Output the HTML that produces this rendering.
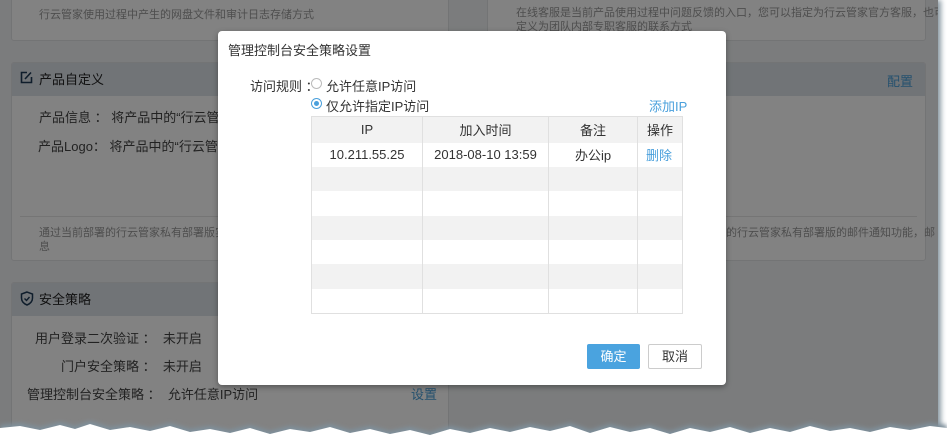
<!DOCTYPE html>
<html><head><meta charset="utf-8"><style>
*{margin:0;padding:0;box-sizing:border-box}
html,body{width:947px;height:447px;overflow:hidden}
body{background:#fff;position:relative;font-family:"Liberation Sans","Noto Sans CJK SC",sans-serif;font-size:13px}
#shot{position:absolute;left:0;top:0;width:938px;height:447px;background:#f2f3f5;box-shadow:3px 0 5px #8a99a3;overflow:hidden}
.card{position:absolute;background:#fff;border:1px solid #e2e3e5;border-radius:3px;overflow:hidden}
.hd{position:absolute;left:0;right:0;top:0;height:33px;background:#dde3ea;color:#222;font-size:13px;line-height:33px;padding-left:27px}
.t{position:absolute;color:#444;white-space:nowrap}
.s{position:absolute;color:#999;font-size:11px;white-space:nowrap}
.lk{position:absolute;color:#4a9fd8;white-space:nowrap}
#ov{position:absolute;left:0;top:0;width:938px;height:447px;background:rgba(0,0,0,0.49)}
#modal{position:absolute;left:218px;top:31px;width:508px;height:354px;background:#fff;border-radius:4px;box-shadow:0 2px 6px rgba(0,0,0,.35)}
.m{position:absolute;white-space:nowrap;color:#333}
table{position:absolute;left:93px;top:85px;width:372px;border-collapse:collapse;font-size:13px;color:#333}
td{height:24.4px;border-left:1px solid #e0e0e0;border-right:1px solid #e0e0e0;text-align:center;padding:0}
tr:nth-child(odd) td{background:#f2f2f2}
tr:first-child td{height:26px;border-top:1px solid #e0e0e0}
tr:last-child td{border-bottom:1px solid #e0e0e0}
.rad{position:absolute;width:11px;height:11px;border:1px solid #bbb;border-radius:50%}
</style></head><body>
<div id="shot">
 <div class="card" style="left:11px;top:-5px;width:438px;height:46px"></div>
 <div class="s" style="left:39px;top:6px">行云管家使用过程中产生的网盘文件和审计日志存储方式</div>
 <div class="card" style="left:487px;top:-5px;width:439px;height:46px"></div>
 <div class="s" style="left:516px;top:6px;line-height:14px">在线客服是当前产品使用过程中问题反馈的入口，您可以指定为行云管家官方客服，也可以自<br>定义为团队内部专职客服的联系方式</div>

 <div class="card" style="left:11px;top:62px;width:438px;height:199px"><div class="hd">产品自定义</div></div>
 <svg style="position:absolute;left:20px;top:71px" width="13" height="13" viewBox="0 0 13 13"><path d="M7 1.5H1.5v10h10V6" fill="none" stroke="#1f3a55" stroke-width="1.6"/><path d="M5 8l6-6.5" stroke="#1f3a55" stroke-width="1.6"/></svg>
 <div class="t" style="left:39px;top:107px">产品信息 ： 将产品中的“行云管家</div>
 <div class="t" style="left:38px;top:136px">产品Logo： 将产品中的“行云管家</div>
 <div style="position:absolute;left:20px;top:216px;width:420px;border-top:1px solid #e6e6e6"></div>
 <div class="s" style="left:39px;top:226px;line-height:14px">通过当前部署的行云管家私有部署版实例<br>息</div>

 <div class="card" style="left:487px;top:62px;width:439px;height:199px"><div class="hd"></div></div>
 <div class="lk" style="left:887px;top:71px">配置</div>
 <div style="position:absolute;left:497px;top:216px;width:420px;border-top:1px solid #e6e6e6"></div>
 <div class="s" style="left:726px;top:226px;line-height:14px">的行云管家私有部署版的邮件通知功能，邮</div>

 <div class="card" style="left:11px;top:282px;width:438px;height:170px"><div class="hd">安全策略</div></div>
 <svg style="position:absolute;left:20px;top:291px" width="14" height="15" viewBox="0 0 14 15"><path d="M7 1L1.5 3v4c0 3.5 2.5 5.8 5.5 7 3-1.2 5.5-3.5 5.5-7V3z" fill="none" stroke="#1f3a55" stroke-width="1.5"/><path d="M4.5 7.5l2 2 3-3.5" fill="none" stroke="#1f3a55" stroke-width="1.4"/></svg>
 <div class="t" style="left:35px;top:328px">用户登录二次验证 ：&nbsp; 未开启</div>
 <div class="t" style="left:61px;top:356px">门户安全策略 ：&nbsp; 未开启</div>
 <div class="t" style="left:27px;top:384px">管理控制台安全策略 ：&nbsp; 允许任意IP访问</div>
 <div class="lk" style="left:411px;top:384px">设置</div>
 <div id="ov"></div>
</div>
<svg style="position:absolute;left:0;top:405px" width="947" height="42" viewBox="0 0 947 42"><defs><filter id="f"><feGaussianBlur stdDeviation="2"/></filter></defs>
<path d="M0 20 L20 18 L40 22 L60 17 L75 21 L90 16 L110 22 L130 19 L150 23 L170 18 L190 24 L210 21 L230 25 L250 20 L270 26 L290 21 L310 24 L330 19 L350 25 L370 21 L390 26 L410 22 L430 27 L450 21 L470 25 L490 20 L510 24 L530 19 L550 23 L570 18 L590 25 L610 19 L630 24 L650 20 L670 26 L690 20 L710 24 L730 19 L750 25 L770 20 L790 24 L810 18 L830 23 L850 20 L870 24 L890 19 L910 22 L930 18 L947 20 V42 H0Z" fill="#7f909b" filter="url(#f)"/>
<path d="M0 23 L20 21 L40 25 L60 20 L75 24 L90 19 L110 25 L130 22 L150 26 L170 21 L190 27 L210 24 L230 28 L250 23 L270 29 L290 24 L310 27 L330 22 L350 28 L370 24 L390 29 L410 25 L430 30 L450 24 L470 28 L490 23 L510 27 L530 22 L550 26 L570 21 L590 28 L610 22 L630 27 L650 23 L670 29 L690 23 L710 27 L730 22 L750 28 L770 23 L790 27 L810 21 L830 26 L850 23 L870 27 L890 22 L910 25 L930 21 L947 23 V42 H0Z" fill="#fff"/></svg>

<div id="modal">
 <div class="m" style="left:10px;top:9px;font-size:13px">管理控制台安全策略设置</div>
 <div class="m" style="left:32px;top:45px">访问规则 ：</div>
 <div class="rad" style="left:93px;top:47px"></div>
 <div class="m" style="left:108px;top:45px">允许任意IP访问</div>
 <div class="rad" style="left:93px;top:67px;border-color:#4aa0dc"><div style="position:absolute;left:2px;top:2px;width:5px;height:5px;border-radius:50%;background:#4aa0dc"></div></div>
 <div class="m" style="left:108px;top:65px">仅允许指定IP访问</div>
 <div class="m" style="left:431px;top:65px;color:#4aa0dc">添加IP</div>
 <table>
  <tr><td style="width:111px">IP</td><td style="width:126px">加入时间</td><td style="width:89px">备注</td><td>操作</td></tr>
  <tr><td>10.211.55.25</td><td>2018-08-10 13:59</td><td>办公ip</td><td style="color:#4aa0dc;text-align:left;padding-left:8px">删除</td></tr>
  <tr><td></td><td></td><td></td><td></td></tr>
  <tr><td></td><td></td><td></td><td></td></tr>
  <tr><td></td><td></td><td></td><td></td></tr>
  <tr><td></td><td></td><td></td><td></td></tr>
  <tr><td></td><td></td><td></td><td></td></tr>
  <tr><td></td><td></td><td></td><td></td></tr>
 </table>
 <div style="position:absolute;left:369px;top:313px;width:53px;height:25px;background:#4aa3df;border-radius:2px;color:#fff;text-align:center;line-height:25px">确定</div>
 <div style="position:absolute;left:430px;top:313px;width:54px;height:25px;border:1px solid #ccc;border-radius:2px;color:#333;text-align:center;line-height:23px">取消</div>
</div>
</body></html>
